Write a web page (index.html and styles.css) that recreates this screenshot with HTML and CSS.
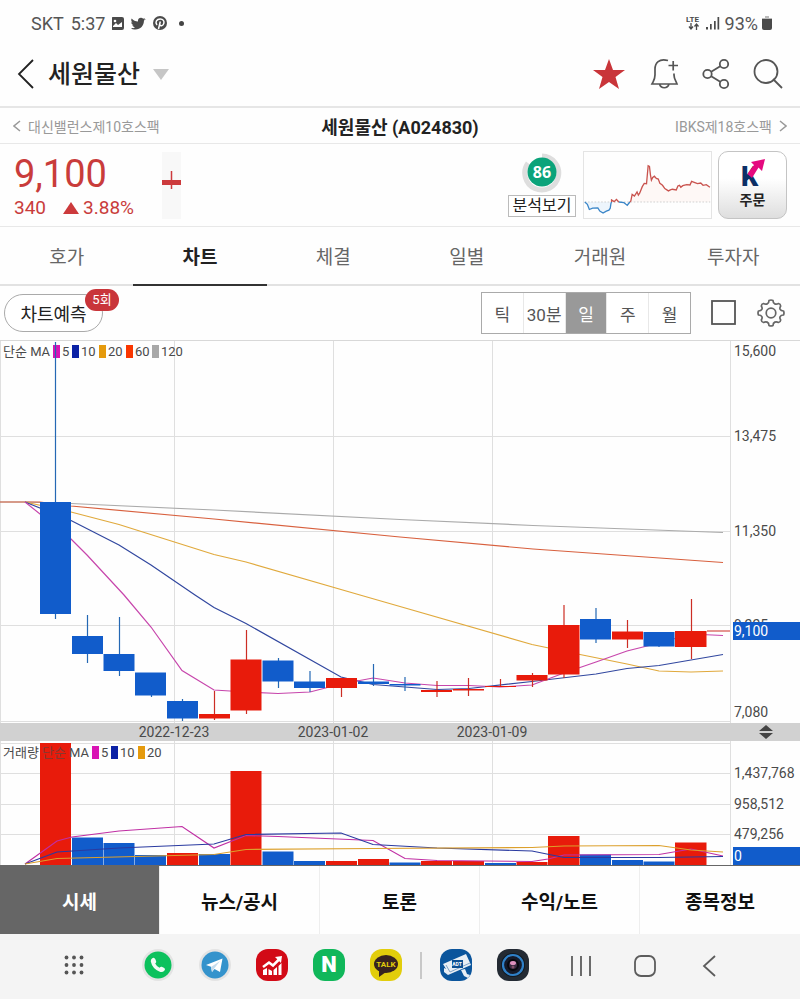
FILE: index.html
```html
<!DOCTYPE html>
<html lang="ko">
<head>
    <meta charset="UTF-8" />
    <meta name="viewport" content="width=device-width, initial-scale=1.0" />
    <title>세원물산 (A024830)</title>
    <link rel="stylesheet" href="styles.css">
</head>
<body>
    <div class="status-bar">
        <div class="status-left">
            <span>SKT</span>
            <span>5:37</span>
            <svg width="60" height="16" viewBox="2 0 60 16" fill="#4a4a4a">
                <rect x="1" y="2" width="13" height="13" rx="2" />
                <circle cx="5" cy="6" r="1.3" fill="#fff" />
                <path d="M3 11l3-3 2 2 4-3v5H3z" fill="#fff" />
                <path d="M36 4l-2 1.600c0 5-3.500 9-8.500 9-1.800 0-3.500-.5-4.500-1.200 1.500 0 3-.4 4-1.200-1.300-.1-2.300-1-2.700-2h1.300c-1.400-.4-2.300-1.600-2.400-3l1.300.3c-1.200-.9-1.700-2.600-.8-4 1.500 1.900 3.800 3 6.300 3.100-.5-2.300 1.100-3.800 3-3.800.9 0 1.600.3 2.200.9l1.900-.7-1.200 1.600z" />
                <circle cx="50" cy="8" r="7" />
                <path d="M47 10c-2.300-3-.3-6 3.200-6 3 0 4.300 2.200 3.600 4.400-.7 2.500-3 3-4 1.600M50.300 6.500L48.500 14" fill="none" stroke="#fff" stroke-width="1.500" />
            </svg>
            <span class="dot"></span>
        </div>
        <div class="status-right">
            <svg width="36" height="18" viewBox="0 0 36 18" fill="#4a4a4a">
                <text x="0" y="8" class="lte">LTE</text>
                <path d="M5 9v6M3 12.500l2 2.500 2-2.500M10.500 16v-6M8.500 12.500l2-2.500 2 2.500" fill="none" stroke="#4a4a4a" stroke-width="1.300" />
                <path d="M20 13h2v2.500h-2zM24 10h1.700v5.500H24zM28 7h1.700v8.500H28zM31.500 3h1.700v12.500h-1.700z" />
            </svg>
            <span>93%</span>
            <svg width="12" height="16" viewBox="0 0 12 16" fill="#4a4a4a">
                <path d="M4 1h4v2h3v3H1V3h3z" fill="#bbb" />
                <path d="M1 4h10v9q0 2-2 2H3q-2 0-2-2z" />
            </svg>
        </div>
    </div>

    <header class="title-bar">
        <button class="icon-btn back" aria-label="뒤로">
            <svg width="18" height="32" viewBox="0 0 18 32"><path d="M16 2L2 16l14 14" fill="none" stroke="#222" stroke-width="1.800" /></svg>
        </button>
        <h1>세원물산</h1>
        <button class="icon-btn" aria-label="종목 선택">
            <svg width="16" height="11" viewBox="0 0 16 11"><path d="M0 0h16L8 11z" fill="#c6c6c6" /></svg>
        </button>
        <div class="actions">
            <button class="icon-btn" aria-label="관심종목">
                <svg width="34" height="32" viewBox="0 0 34 32"><path d="M17 1l4 11h12l-9.500 7 3.500 12-10-7-10 7 3.500-12L1 12h12z" fill="#c9353a" /></svg>
            </button>
            <button class="icon-btn" aria-label="알림 추가">
                <svg width="30" height="32" viewBox="0 0 30 32" fill="none" stroke="#555" stroke-width="1.700">
                    <path d="M19 2.500C10 0 6 5 6 11v6c0 4-1 5-3 9h25c-1-3-3-5-3-9v-1.500M10.500 26c1.500 5 8 5 9.500 0M19.500 7.500h9.500M24.200 3v9.500" />
                </svg>
            </button>
            <button class="icon-btn" aria-label="공유">
                <svg width="28" height="32" viewBox="0 0 28 32" fill="none" stroke="#555" stroke-width="1.800">
                    <circle cx="5.500" cy="16" r="4.200" /><circle cx="22" cy="6" r="4.200" /><circle cx="22" cy="26" r="4.200" />
                    <path d="M9.200 13.800l9-5.500M9.200 18.200l9 5.500" />
                </svg>
            </button>
            <button class="icon-btn" aria-label="검색">
                <svg width="30" height="32" viewBox="0 0 30 32" fill="none" stroke="#555" stroke-width="1.800">
                    <circle cx="13" cy="13.500" r="11.500" /><path d="M20 21l9 9" />
                </svg>
            </button>
        </div>
    </header>

    <nav class="stock-nav">
        <a href="#prev" class="prev">
            <svg width="8" height="14" viewBox="0 0 8 14"><path d="M7 2L1 7l6 5" fill="none" stroke="#999" stroke-width="1.500" /></svg>
            대신밸런스제10호스팩
        </a>
        <strong>세원물산 (A024830)</strong>
        <a href="#next" class="next">
            IBKS제18호스팩
            <svg width="8" height="14" viewBox="0 0 8 14"><path d="M1 2l6 5-6 5" fill="none" stroke="#999" stroke-width="1.500" /></svg>
        </a>
    </nav>

    <section class="summary">
        <div class="quote">
            <div class="price">9,100</div>
            <div class="change">
                <span>340</span>
                <span class="rate"><svg width="16" height="12" viewBox="0 0 16 12"><path d="M8 0l8 12H0z" fill="#cc3a3c" /></svg>3.88%</span>
            </div>
        </div>
        <svg class="mini-candle" width="19" height="67" viewBox="0 0 19 67">
            <rect width="19" height="67" fill="#f8f8f8" />
            <path d="M9.500 19v18" stroke="#cc3a3c" stroke-width="1.500" />
            <rect y="28" width="19" height="5" fill="#cc3a3c" />
        </svg>
        <div class="score">
            <svg width="42" height="42" viewBox="0 0 42 42">
                <path d="M21 3a17 17 0 1 1-14 7" fill="none" stroke="#dedede" stroke-width="5" />
                <circle cx="21" cy="19" r="14.500" fill="#0ba37a" />
                <text x="21" y="25" text-anchor="middle" class="score-text">86</text>
            </svg>
            <button class="analysis-btn">분석보기</button>
        </div>
        <svg class="spark" width="129" height="68" viewBox="0 0 384 202" fill="none" stroke-width="3">
            <path d="M138 153L145 130 152 135 160 122 168 132 176 106 190 95 194 42 203 86 213 74 238 102 256 119 290 102 327 90 383 108V153z" fill="#fef8f6" />
            <path d="M0 153L14 176 40 171 56 187 74 178 82 153z" fill="#edf5fc" />
            <path d="M0 153h384" stroke="#d0d0d0" stroke-dasharray="5 5" />
            <path d="M0 153L8 160 14 176 24 172 40 171 46 181 56 187 66 181 74 178 78 172 80 158 82 153M104 153L120 155 126 160 130 163 138 153" stroke="#3b86c8" stroke-width="4" />
            <path d="M82 153V147L90 152 97 145 104 153M138 153L141 150 145 130 152 135 160 122 164 132 168 126 176 106 182 96 189 97 194 42 198 44 201 70 204 86 208 78 213 74 219 81 225 83 230 96 238 102 245 112 256 119 262 116 268 114 280 116 285 104 290 102 294 108 300 103 312 100 322 101 327 90 333 92 345 97 355 95 362 102 372 100 383 108" stroke="#c9534e" stroke-width="4" />
        </svg>
        <button class="order-btn">
            <svg width="30" height="30" viewBox="0 0 30 30">
                <text x="3" y="28" class="k-logo">K</text>
                <path d="M27 1l-3 12-3.500-3.500L14 20 9.500 16 16 7l-3-3z" fill="#e5097f" />
            </svg>
            주문
        </button>
    </section>

    <nav class="tabs">
        <a href="#hoga">호가</a>
        <a href="#chart" class="active">차트</a>
        <a href="#trade">체결</a>
        <a href="#daily">일별</a>
        <a href="#member">거래원</a>
        <a href="#investor">투자자</a>
    </nav>

    <div class="toolbar">
        <button class="predict-btn">차트예측<span class="badge">5회</span></button>
        <div class="periods">
            <button>틱</button>
            <button>30분</button>
            <button class="selected">일</button>
            <button>주</button>
            <button>월</button>
        </div>
        <button class="icon-btn" aria-label="전체화면">
            <svg width="26" height="26" viewBox="0 0 26 26"><rect x="1" y="1" width="23" height="23" fill="none" stroke="#555" stroke-width="1.800" /></svg>
        </button>
        <button class="icon-btn" aria-label="설정">
            <svg width="28" height="28" viewBox="0 0 28 28" fill="none" stroke="#666" stroke-width="1.700" stroke-linejoin="round">
                <path d="M12 1.500Q14 .5 16 1.500C16 5 19 6 21.500 4.500Q23.500 4.800 23.700 7C22 9.500 23 12 26.500 12Q27.500 14 26.500 16C23 16 22 18.500 23.700 21Q23.500 23.200 21.500 23.500C19 22 16 23 16 26.500Q14 27.500 12 26.500C12 23 9 22 6.500 23.500Q4.500 23.200 4.300 21C6 18.500 5 16 1.500 16Q.5 14 1.500 12C5 12 6 9.500 4.300 7Q4.500 4.800 6.500 4.500C9 6 12 5 12 1.500z" />
                <circle cx="14" cy="14" r="4.800" />
            </svg>
        </button>
    </div>

    <!-- price chart, date bar and volume chart share one x axis -->
    <svg class="chart" viewBox="0 341 800 525">
        <g class="grid">
            <path d="M0 436.500h730M0 531.500h730M0 625.500h730M0 721.500h730M0 743.500h730M0 773.500h730M0 804.500h730M0 834.500h730" />
            <path d="M.5 341v524M174.500 341v524M333.500 341v524M492.500 341v524M730.500 341v524" />
        </g>

        <g class="legend">
            <text x="3" y="356">단순 MA</text>
            <rect x="53" y="345" width="7" height="13" fill="#d914b4" /><text x="62" y="356">5</text>
            <rect x="72" y="345" width="7" height="13" fill="#0b21a5" /><text x="81" y="356">10</text>
            <rect x="99" y="345" width="7" height="13" fill="#e59a0c" /><text x="108" y="356">20</text>
            <rect x="126" y="345" width="7" height="13" fill="#fa3600" /><text x="135" y="356">60</text>
            <rect x="152" y="345" width="7" height="13" fill="#a8a8a8" /><text x="161" y="356">120</text>
        </g>

        <g class="ma">
            <polyline stroke="#aaa" points="0,502 25,502 71,503.500 214,510 400,519.500 533,525.500 723,532.500" />
            <polyline stroke="#d8603e" points="0,502 40,502 71,506 214,519 400,537 533,549 723,562.500" />
            <polyline stroke="#e0a93c" points="25,502 71,512 119,524.500 214,554.500 246,562 360,595 400,606.500 532,644.500 580,654.500 627,664 659,671 691,672 723,671" />
            <polyline stroke="#31479f" points="25,502 71,520.500 119,545 151,565 195,595 214,607.500 246,623.500 341,677 373,684.500 405,687 437,689.500 469,688.500 532,681.500 596,674 627,668.500 659,665.500 723,654.500" />
            <polyline stroke="#c746ac" points="25,502 55,526 71,539 87,555 124,595 151,627 182,670.500 214,690 246,692 278,693.500 310,692 341,684 373,678 405,683 437,685.500 469,685.500 500,687 532,685 564,673 596,662 627,651 659,643 691,634 723,635.500" />
        </g>

        <g class="down">
            <path d="M55.500 342v277M87.500 615v48M119.500 617v59M151.500 673v24M182.500 699v22M278.500 658v30M310 671v21M373.500 664v22M405 677v14M596 608v35M659 632v15" />
            <rect x="40" y="502" width="31" height="112" />
            <rect x="72" y="636" width="31" height="18" />
            <rect x="103.500" y="654" width="31" height="17" />
            <rect x="135" y="672.500" width="31" height="23" />
            <rect x="167" y="701" width="31" height="17.500" />
            <rect x="262.500" y="660.500" width="31" height="21" />
            <rect x="294" y="681.500" width="31" height="6.500" />
            <rect x="358" y="681.500" width="31" height="2.500" />
            <rect x="389.500" y="684" width="31" height="1.500" />
            <rect x="580" y="619" width="31" height="20.500" />
            <rect x="643.500" y="632" width="31" height="14.500" />
        </g>
        <g class="up">
            <path d="M214.500 691v29M246.500 630v84M341.500 679v18M437 681v16M468.500 678v18M500.500 679v8M532.500 673v14M564 605v73M627.500 620v28M691.500 599v60M707 631h23" />
            <rect x="199" y="714" width="31" height="4.500" />
            <rect x="230.500" y="659.500" width="31" height="51" />
            <rect x="326" y="678" width="31" height="10" />
            <rect x="421" y="690" width="31" height="2" />
            <rect x="453" y="689" width="31" height="1.500" />
            <rect x="485" y="686" width="31" height="1" />
            <rect x="516.500" y="675" width="31" height="5.500" />
            <rect x="548" y="625" width="31.500" height="49.500" />
            <rect x="612" y="631.500" width="31" height="8" />
            <rect x="675" y="631" width="31.500" height="16" />
        </g>

        <g class="axis">
            <text x="734" y="356">15,600</text>
            <text x="734" y="441">13,475</text>
            <text x="734" y="536">11,350</text>
            <text x="734" y="630">9,225</text>
            <text x="734" y="717">7,080</text>
            <rect x="733" y="622" width="67" height="18" class="tag" />
            <text x="734" y="636" class="tag-text">9,100</text>
        </g>

        <rect y="723" width="800" height="18" fill="#d1d1d1" />
        <g class="axis" text-anchor="middle">
            <text x="174" y="737">2022-12-23</text>
            <text x="333" y="737">2023-01-02</text>
            <text x="492" y="737">2023-01-09</text>
        </g>
        <path d="M759 731l7-6 7 6zM759 733l7 6 7-6z" fill="#444" />

        <g class="down">
            <rect x="72" y="837.500" width="31" height="28" />
            <rect x="103.500" y="843" width="31" height="22" />
            <rect x="135" y="855" width="31" height="10" />
            <rect x="199" y="854" width="31" height="11" />
            <rect x="262.500" y="851.500" width="31" height="14" />
            <rect x="294" y="861" width="31" height="4" />
            <rect x="389.500" y="862.500" width="31" height="3" />
            <rect x="485" y="863" width="31" height="2" />
            <rect x="580" y="854.500" width="31" height="11" />
            <rect x="612" y="860" width="31" height="5" />
            <rect x="643.500" y="861.500" width="31" height="4" />
        </g>
        <g class="up">
            <rect x="40" y="743" width="31" height="122" />
            <rect x="167" y="853" width="31" height="12" />
            <rect x="230.500" y="771" width="31" height="94" />
            <rect x="326" y="861" width="31" height="4" />
            <rect x="358" y="859" width="31" height="6" />
            <rect x="421" y="861" width="31" height="4" />
            <rect x="453" y="861" width="31" height="4" />
            <rect x="516.500" y="862" width="31" height="3" />
            <rect x="548" y="836" width="31.500" height="29" />
            <rect x="675" y="842.500" width="31.500" height="23" />
        </g>
        <g class="ma">
            <polyline stroke="#c02fa4" points="25,864 57,841 72,837 119,831 182,826.500 214,848 246,835.500 278,836.500 373,840.500 405,858.500 437,860.500 532,861.500 548,859 564,855 659,854.500 691,849 723,856" />
            <polyline stroke="#2a3aa0" points="25,864 57,852 119,848 214,844 246,834.500 341,833 373,844.500 437,848 532,851 564,857.500 659,857.500 723,856.500" />
            <polyline stroke="#dca02c" points="25,864 57,858.500 214,854.500 246,849.500 373,848.500 532,847.500 564,846 659,845.500 691,850 723,852" />
        </g>
        <g class="legend">
            <text x="3" y="757">거래량</text>
            <text x="42" y="757" opacity=".6">단순</text>
            <text x="69" y="757">MA</text>
            <rect x="92" y="746" width="7" height="13" fill="#d914b4" /><text x="101" y="757">5</text>
            <rect x="111" y="746" width="7" height="13" fill="#0b21a5" /><text x="120" y="757">10</text>
            <rect x="138" y="746" width="7" height="13" fill="#e59a0c" /><text x="147" y="757">20</text>
        </g>
        <g class="axis">
            <text x="734" y="778">1,437,768</text>
            <text x="734" y="809">958,512</text>
            <text x="734" y="839">479,256</text>
            <rect x="733" y="847" width="67" height="18" class="tag" />
            <text x="734" y="861" class="tag-text">0</text>
        </g>
        <path d="M0 865.500h800" stroke="#666" />
    </svg>

    <nav class="menu">
        <a href="#quote" class="active">시세</a>
        <a href="#news">뉴스/공시</a>
        <a href="#talk">토론</a>
        <a href="#note">수익/노트</a>
        <a href="#info">종목정보</a>
    </nav>

    <footer class="dock">
        <button class="icon-btn" aria-label="앱 목록">
            <svg width="32" height="32" viewBox="0 0 32 32" fill="#555">
                <circle cx="8.500" cy="8.500" r="1.900" /><circle cx="16" cy="8.500" r="1.900" /><circle cx="23.500" cy="8.500" r="1.900" />
                <circle cx="8.500" cy="16" r="1.900" /><circle cx="16" cy="16" r="1.900" /><circle cx="23.500" cy="16" r="1.900" />
                <circle cx="8.500" cy="23.500" r="1.900" /><circle cx="16" cy="23.500" r="1.900" /><circle cx="23.500" cy="23.500" r="1.900" />
            </svg>
        </button>
        <div class="apps first">
            <button class="icon-btn" aria-label="전화">
                <svg width="32" height="32" viewBox="0 0 32 32">
                    <circle cx="16" cy="16" r="16" fill="#e3e3e3" /><circle cx="16" cy="16" r="13.500" fill="#0cc15d" />
                    <path d="M10 9.500q2-2 3.500 1l.7 2q.3 1-1 2 1.500 3 4.300 4.300 1.300-1.500 2.300-1l2.500 1.300q1.500 1 0 2.700-2 2-5 .7-7-3-8.500-10-.2-1.800 1.200-3z" fill="#f3fbf6" />
                </svg>
            </button>
            <button class="icon-btn" aria-label="텔레그램">
                <svg width="32" height="32" viewBox="0 0 32 32">
                    <circle cx="16" cy="16" r="16" fill="#e3e3e3" /><circle cx="16" cy="16" r="13.500" fill="#3493cc" />
                    <path d="M7 16L23.500 9.500 21 23l-5.500-3-2.500 3-1-5.200z" fill="#fff" /><path d="M12 18l9-6-5.800 7.500L13 23z" fill="#c5dced" />
                </svg>
            </button>
            <button class="icon-btn" aria-label="증권">
                <svg width="32" height="32" viewBox="0 0 32 32">
                    <rect width="32" height="32" rx="12" fill="#d20a16" />
                    <path d="M7 21l4-2v7H7zM12.500 20l3.500 2v4h-3.500zM17.500 21l3.500-3v8h-3.500zM22.500 17l3-3v12h-3z" fill="#fff" />
                    <path d="M7 18l6-4.500 4 3L23.500 10" fill="none" stroke="#fff" stroke-width="2.500" /><path d="M19 8l7-1-1 7z" fill="#fff" />
                </svg>
            </button>
            <button class="icon-btn" aria-label="네이버">
                <svg width="32" height="32" viewBox="0 0 32 32">
                    <rect width="32" height="32" rx="12" fill="#10b75a" />
                    <text x="16" y="23" text-anchor="middle" class="n-logo">N</text>
                </svg>
            </button>
            <button class="icon-btn" aria-label="카카오톡">
                <svg width="32" height="32" viewBox="0 0 32 32">
                    <rect width="32" height="32" rx="12" fill="#e2cd0b" />
                    <ellipse cx="16" cy="15" rx="12" ry="9" fill="#372320" /><path d="M9 21v7l7-5z" fill="#372320" />
                    <text x="16" y="18" text-anchor="middle" class="talk-logo">TALK</text>
                </svg>
            </button>
        </div>
        <span class="divider"></span>
        <div class="apps">
            <button class="icon-btn" aria-label="ADT">
                <svg width="32" height="32" viewBox="0 0 32 32">
                    <rect width="32" height="32" rx="12" fill="#0b559c" />
                    <path d="M3 15L26 5l5 11-23 10-4-3v-4l2 1z" fill="#e8eef4" /><path d="M21 21l4-1 2 5 3 1-2 3-4-2z" fill="#e8eef4" />
                    <path d="M6 16l4 7L30 14" fill="none" stroke="#7fa3c7" /><rect x="12" y="11" width="11" height="8" fill="#0b4f92" />
                    <text x="17" y="17" text-anchor="middle" class="adt-logo">ADT</text>
                </svg>
            </button>
            <button class="icon-btn" aria-label="카메라">
                <svg width="32" height="32" viewBox="0 0 32 32">
                    <rect width="32" height="32" rx="12" fill="#232a33" />
                    <circle cx="16" cy="16" r="12" fill="#111820" /><circle cx="16" cy="16" r="10" fill="#151a2a" stroke="#2f80c8" stroke-width="2.200" />
                    <circle cx="16" cy="16" r="5" fill="#372a40" stroke="#07090e" stroke-width="2" /><ellipse cx="16" cy="14" rx="3" ry="2" fill="#dc91bd" />
                    <circle cx="16" cy="18" r="1.500" fill="#805068" />
                </svg>
            </button>
        </div>
        <div class="system-keys">
            <button class="icon-btn" aria-label="최근 앱">
                <svg width="32" height="32" viewBox="0 0 32 32"><path d="M7 7v20M16 7v20M25 7v20" stroke="#5c5c5c" stroke-width="1.800" /></svg>
            </button>
            <button class="icon-btn" aria-label="홈">
                <svg width="32" height="32" viewBox="0 0 32 32"><rect x="6" y="7" width="20" height="20" rx="6" fill="none" stroke="#5c5c5c" stroke-width="1.800" /></svg>
            </button>
            <button class="icon-btn" aria-label="이전">
                <svg width="32" height="32" viewBox="0 0 32 32"><path d="M22 7L11 17l11 10" fill="none" stroke="#5c5c5c" stroke-width="1.800" /></svg>
            </button>
        </div>
    </footer>
</body>
</html>
```
FILE: styles.css
```css
* {
    box-sizing: border-box;
}

body {
    margin: 0;
    background: #fefefe;
    color: #222;
    font-family: Roboto, "Noto Sans CJK KR", sans-serif;
    font-size: 14px;
}

a {
    color: inherit;
    text-decoration: none;
}

button {
    font-family: inherit;
    color: inherit;
    padding: 0;
    cursor: pointer;
}

svg {
    display: block;
    flex-shrink: 0;
}

.icon-btn {
    background: none;
    border: none;
    display: block;
}

/* status bar */
.status-bar {
    display: flex;
    justify-content: space-between;
    align-items: center;
    height: 46px;
    padding: 0 27px 0 31px;
    font-size: 18px;
    color: #555;
}

.status-left {
    display: flex;
    align-items: center;
    gap: 7px;
}

.dot {
    width: 5px;
    height: 5px;
    border-radius: 50%;
    background: #444;
}

.status-right {
    display: flex;
    align-items: center;
    gap: 3px;
}

.lte {
    font-size: 8px;
    font-weight: bold;
}

/* title */
.title-bar {
    display: flex;
    align-items: center;
    height: 62px;
    padding: 0 17px 4px 17px;
    border-bottom: 2px solid #e6e6e6;
}

.title-bar h1 {
    margin: 0 13px;
    padding-top: 2px;
    font-size: 25px;
    font-weight: 500;
    line-height: 32px;
}

.actions {
    display: flex;
    align-items: center;
    gap: 23px;
    margin-left: auto;
}

.stock-nav {
    display: grid;
    grid-template-columns: 1fr auto 1fr;
    align-items: center;
    height: 36px;
    padding: 0 13px;
    border-bottom: 1px solid #e8e8e8;
    color: #999;
}

.stock-nav a {
    display: flex;
    align-items: center;
    gap: 7px;
}

.stock-nav .next {
    justify-content: flex-end;
}

.stock-nav strong {
    font-size: 18px;
    font-weight: bold;
    color: #222;
}

/* price summary */
.summary {
    display: flex;
    align-items: center;
    height: 83px;
    padding: 0 13px 0 14px;
    border-bottom: 1px solid #e8e8e8;
}

.quote {
    width: 148px;
    padding-top: 6px;
    color: #c93c3b;
}

.price {
    font-size: 38px;
    line-height: 40px;
}

.change {
    display: flex;
    gap: 17px;
    font-size: 19px;
    line-height: 28px;
}

.rate {
    display: flex;
    align-items: center;
    gap: 4px;
}

.score {
    display: flex;
    flex-direction: column;
    align-items: center;
    margin-left: auto;
    margin-right: 7px;
}

.score-text {
    font-family: "Open Sans", sans-serif;
    font-size: 16px;
    font-weight: bold;
    fill: #fff;
}

.analysis-btn {
    width: 68px;
    height: 22px;
    border: 1px solid #bbb;
    background: #fff;
    font-size: 16px;
    line-height: 20px;
}

.spark {
    border: 1px solid #e4e4e4;
    margin-right: 6px;
}

.order-btn {
    display: flex;
    flex-direction: column;
    align-items: center;
    justify-content: center;
    width: 69px;
    height: 68px;
    border: 1px solid #c4c4c4;
    border-radius: 10px;
    background: linear-gradient(#fff 40%, #dedede);
    font-size: 14px;
    font-weight: bold;
    line-height: 24px;
}

.k-logo {
    font-size: 27px;
    font-weight: 900;
    fill: #0b2f66;
}

/* tabs */
.tabs {
    display: grid;
    grid-template-columns: repeat(6, 1fr);
    height: 59px;
    font-size: 19px;
    color: #666;
}

.tabs a {
    display: flex;
    align-items: center;
    justify-content: center;
    border-bottom: 2px solid #e2e2e2;
}

.tabs .active {
    border-color: #333;
    color: #222;
    font-weight: bold;
}

/* chart toolbar */
.toolbar {
    display: flex;
    align-items: center;
    height: 55px;
    padding: 0 15px 0 4px;
    border-bottom: 1px solid #d8d8d8;
}

.toolbar .icon-btn {
    margin-left: 20px;
}

.predict-btn {
    position: relative;
    width: 99px;
    height: 38px;
    border: 1px solid #aaa;
    border-radius: 19px;
    background: #fff;
    font-size: 18px;
}

.badge {
    position: absolute;
    top: -6px;
    right: -17px;
    width: 34px;
    height: 22px;
    border-radius: 11px;
    background: #c9353a;
    color: #fff;
    font-size: 13px;
    line-height: 22px;
}

.periods {
    display: flex;
    width: 210px;
    margin-left: auto;
    border: 1px solid #aaa;
}

.periods button {
    flex: 1;
    height: 40px;
    border: none;
    border-left: 1px solid #e8e8e8;
    background: #fff;
    color: #555;
    font-size: 17px;
    white-space: nowrap;
}

.periods button:first-child {
    border-left: none;
}

.periods .selected {
    background: #999;
    color: #fff;
}

/* chart */
.chart {
    width: 100%;
    height: auto;
}

.grid path {
    stroke: #dfdfdf;
}

.legend,
.axis {
    font-size: 14px;
    fill: #4a4a4a;
}

.legend {
    font-size: 13px;
}

.ma polyline {
    fill: none;
    stroke-width: 1.2;
}

.down {
    fill: #115ccb;
    stroke: none;
}

.down path {
    stroke: #2468b4;
    stroke-width: 1.2;
}

.up {
    fill: #e81b0b;
}

.up path {
    stroke: #cc2d24;
    stroke-width: 1.2;
}

.axis .tag {
    fill: #115ccb;
}

.axis .tag-text {
    fill: #fff;
}

/* bottom menu */
.menu {
    display: grid;
    grid-template-columns: repeat(5, 1fr);
    height: 68px;
    font-size: 19px;
    font-weight: bold;
    color: #111;
}

.menu a {
    display: flex;
    align-items: center;
    justify-content: center;
    border-right: 1px solid #eee;
}

.menu a:last-child {
    border-right: none;
}

.menu .active {
    background: #666;
    color: #fff;
}

/* dock */
.dock {
    display: flex;
    align-items: center;
    justify-content: center;
    height: 65px;
    padding: 0 18px 3px 0;
    background: #f4f4f4;
}

.apps {
    display: flex;
    gap: 25px;
}

.apps.first {
    margin-left: 52px;
}

.divider {
    width: 2px;
    height: 27px;
    margin: 0 18px;
    background: #c8c8c8;
}

.system-keys {
    display: flex;
    gap: 32px;
    margin-left: 36px;
}

.n-logo {
    font-size: 22px;
    font-weight: 900;
    fill: #fff;
}

.talk-logo {
    font-size: 8px;
    font-weight: bold;
    fill: #e2cd0b;
}

.adt-logo {
    font-size: 5px;
    font-weight: bold;
    fill: #fff;
}
```
